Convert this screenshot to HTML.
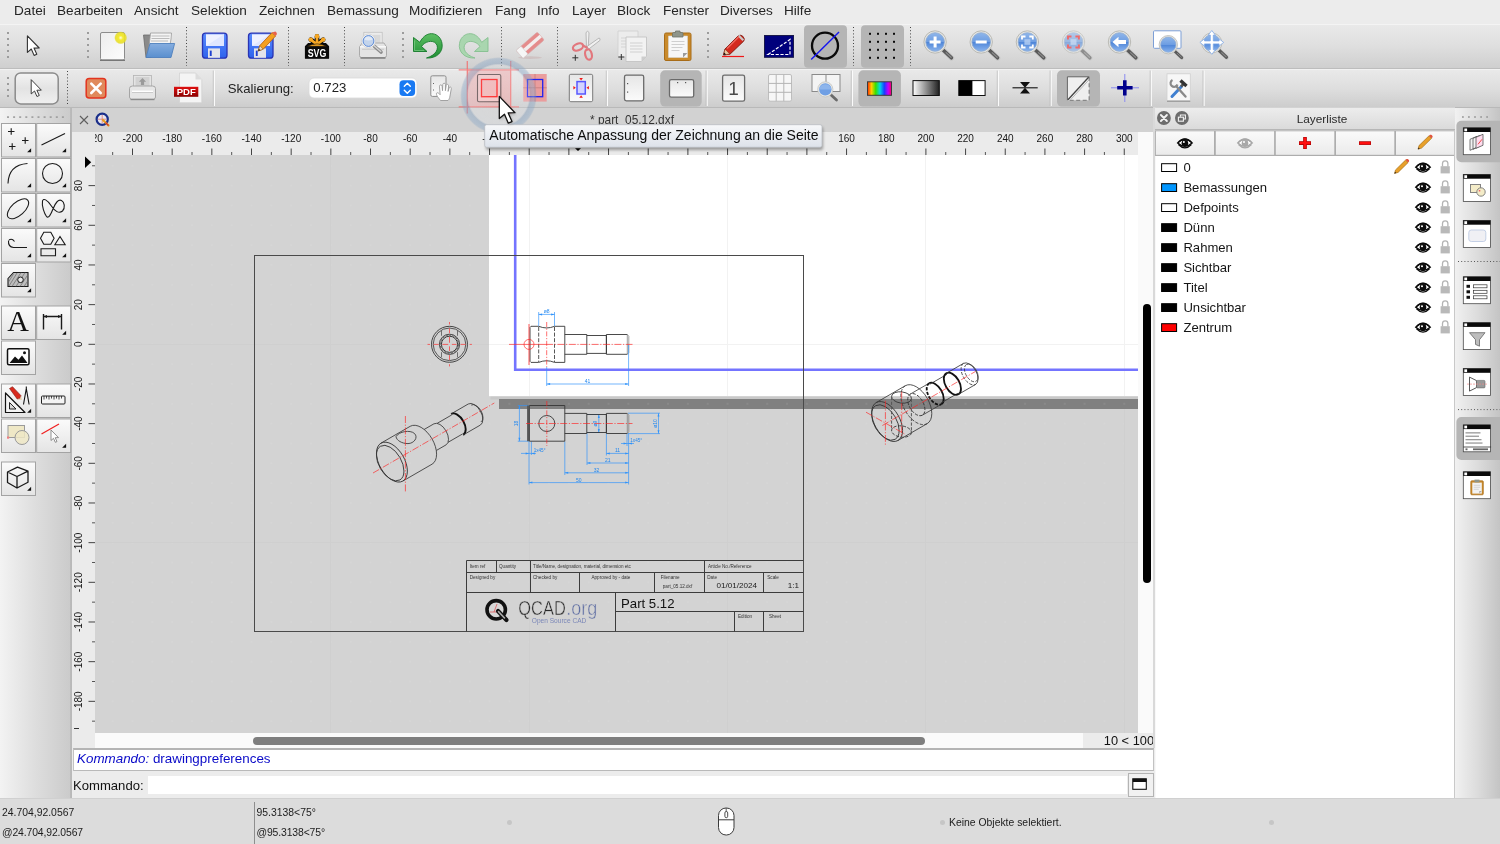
<!DOCTYPE html>
<html><head><meta charset="utf-8"><title>QCAD</title>
<style>
*{box-sizing:border-box;margin:0;padding:0}
html,body{width:1500px;height:844px;overflow:hidden;background:#ececec;font-family:"Liberation Sans",sans-serif;color:#222}
.abs{position:absolute}
svg,#menubar,#tabbar,#status,.txt{will-change:transform}
#menubar{position:absolute;left:0;top:0;width:1500px;height:24px;background:#ececec}
#menubar span{position:absolute;top:2px;font-size:13.6px;line-height:18px;color:#262626;white-space:nowrap}
#tb1{position:absolute;left:0;top:24px;width:1500px;height:45px;background:linear-gradient(#e9e9e9 0%,#e0e0e0 45%,#cfcfcf 100%);border-top:1px solid #f4f4f4;border-bottom:1px solid #bdbdbd}
#tb2{position:absolute;left:0;top:69px;width:1500px;height:39px;background:linear-gradient(#e9e9e9 0%,#dedede 50%,#cdcdcd 100%);border-top:1px solid #f2f2f2;border-bottom:1px solid #b9b9b9}
.vdots{position:absolute;width:1px;border-left:1px dotted #555}
.grip{position:absolute;width:2px;background:repeating-linear-gradient(#9a9a9a 0 2px,transparent 2px 5px)}
.sel{position:absolute;background:#b4b4b4;border-radius:4px}
#lefttb{position:absolute;left:0;top:108px;width:72px;height:690px;background:linear-gradient(90deg,#f3f3f3 0%,#dddddd 50%,#cbcbcb 97%,#b9b9b9 98%,#b9b9b9 100%)}
.tbtn{position:absolute;width:35px;height:35px;background:linear-gradient(#fafafa,#e6e6e6);border:1px solid #a6a6a6;border-top-color:#b8b8b8}
.tbtn:after{content:"";}
.corner{position:absolute;right:4px;bottom:4px;width:0;height:0;border-left:5px solid transparent;border-bottom:5px solid #111}
#tabbar{position:absolute;left:72px;top:108px;width:1083px;height:24px;background:#d2d2d2}
#hruler{position:absolute;left:95px;top:132px;width:1043px;height:23px;background:#ebebeb;overflow:hidden}
#rcorner{position:absolute;left:72px;top:132px;width:23px;height:23px;background:#ebebeb}
#vruler{position:absolute;left:72px;top:155px;width:23px;height:578px;background:#ebebeb;overflow:hidden}
#canvas{position:absolute;left:95px;top:155px;width:1043px;height:578px;background:#d3d3d3;overflow:hidden}
#vscroll{position:absolute;left:1138px;top:132px;width:16px;height:601px;background:#fafafa}
#hscroll{position:absolute;left:72px;top:733px;width:1011px;height:15px;background:linear-gradient(90deg,#ebebeb 0,#ebebeb 23px,#fafafa 23px)}
#layers{position:absolute;left:1155px;top:108px;width:300px;height:690px;background:#fff}
#righttb{position:absolute;left:1455px;top:108px;width:45px;height:690px;background:linear-gradient(90deg,#f1f1f1 0%,#dcdcdc 50%,#c4c4c4 100%)}
#status{position:absolute;left:0;top:798px;width:1500px;height:46px;background:#dcdcdc;box-shadow:inset 0 1px 0 #d0d0d0}
</style></head><body>
<div id="menubar">
<span style="left:14px">Datei</span><span style="left:57px">Bearbeiten</span><span style="left:134px">Ansicht</span><span style="left:191px">Selektion</span><span style="left:259px">Zeichnen</span><span style="left:327px">Bemassung</span><span style="left:409px">Modifizieren</span><span style="left:495px">Fang</span><span style="left:537px">Info</span><span style="left:572px">Layer</span><span style="left:617px">Block</span><span style="left:663px">Fenster</span><span style="left:720px">Diverses</span><span style="left:784px">Hilfe</span>
</div>
<div id="tb1"></div>
<svg class="abs" style="left:0;top:22px" width="1500" height="48" viewBox="0 22 1500 48" font-family="Liberation Sans, sans-serif">
<defs>
<linearGradient id="gPage" x1="0" y1="0" x2="1" y2="1"><stop offset="0" stop-color="#ededed"/><stop offset="1" stop-color="#fdfdfd"/></linearGradient>
<linearGradient id="gBlue" x1="0" y1="0" x2="0" y2="1"><stop offset="0" stop-color="#5a8cff"/><stop offset="1" stop-color="#2e62ec"/></linearGradient>
<linearGradient id="gFolder" x1="0" y1="0" x2="0" y2="1"><stop offset="0" stop-color="#86aee0"/><stop offset="1" stop-color="#5a8fce"/></linearGradient>
<linearGradient id="gLens" x1="0" y1="0" x2="0" y2="1"><stop offset="0" stop-color="#8fb6ea"/><stop offset=".5" stop-color="#6d9de2"/><stop offset=".52" stop-color="#4f86d8"/><stop offset="1" stop-color="#8ab4ee"/></linearGradient>
<linearGradient id="gGreen" x1="0" y1="0" x2="0" y2="1"><stop offset="0" stop-color="#5dbf63"/><stop offset="1" stop-color="#1f8f35"/></linearGradient>
<radialGradient id="gGlow"><stop offset="0" stop-color="#fffde0"/><stop offset=".35" stop-color="#f4ea30"/><stop offset=".8" stop-color="#e6dc20" stop-opacity=".85"/><stop offset="1" stop-color="#e6dc20" stop-opacity="0"/></radialGradient>
<g id="mag"><path d="M7.5 7.5L16.5 16" stroke="#bbb" stroke-width="5.2" stroke-linecap="round" opacity=".5"/><path d="M8 8L16.3 15.8" stroke="#5a5a5a" stroke-width="3.6" stroke-linecap="round"/><path d="M11 10.6L16 15.3" stroke="#8a8a8a" stroke-width="1.2" stroke-linecap="round"/><circle r="11.2" fill="#e6e6e2" stroke="#b9b9b4" stroke-width="1"/><circle r="9.3" fill="url(#gLens)" stroke="#8ea9cf" stroke-width=".8"/></g>
<g id="arrowcur"><path d="M0 0V16.6L3.9 13.2L6.7 19.6L9.4 18.4L6.6 12.3L11.8 12.2Z" fill="#fff" stroke="#333" stroke-width="1.1" stroke-linejoin="round"/></g>
</defs>
<!-- grips -->
<g fill="#9c9c9c"><rect x="7" y="32" width="2" height="2"/><rect x="7" y="38" width="2" height="2"/><rect x="7" y="44" width="2" height="2"/><rect x="7" y="50" width="2" height="2"/><rect x="7" y="56" width="2" height="2"/>
<rect x="87" y="32" width="2" height="2"/><rect x="87" y="38" width="2" height="2"/><rect x="87" y="44" width="2" height="2"/><rect x="87" y="50" width="2" height="2"/><rect x="87" y="56" width="2" height="2"/>
<rect x="402" y="32" width="2" height="2"/><rect x="402" y="38" width="2" height="2"/><rect x="402" y="44" width="2" height="2"/><rect x="402" y="50" width="2" height="2"/><rect x="402" y="56" width="2" height="2"/>
<rect x="707" y="32" width="2" height="2"/><rect x="707" y="38" width="2" height="2"/><rect x="707" y="44" width="2" height="2"/><rect x="707" y="50" width="2" height="2"/><rect x="707" y="56" width="2" height="2"/></g>
<!-- dotted separators -->
<g stroke="#444" stroke-width="1" stroke-dasharray="1 2.2"><path d="M186.5 27V66M288.5 27V66M344.5 27V66M501.5 27V66M557.5 27V66M853.5 27V66M910.5 27V66"/></g>
<!-- cursor -->
<use href="#arrowcur" x="27.4" y="35.8"/>
<!-- new -->
<rect x="100.5" y="32.5" width="24" height="27.5" rx="1.5" fill="url(#gPage)" stroke="#8c8c8c" stroke-width="1"/><path d="M100 60.3h25" stroke="#777" stroke-width="1.4"/>
<circle cx="120.7" cy="37.8" r="6.6" fill="url(#gGlow)"/>
<!-- open -->
<path d="M143.5 35l2.5 22.5h5V35z" fill="#8a8a8a" stroke="#6a6a6a" stroke-width=".8"/>
<path d="M148 57l2.5-24h21l-.5 6-3 18z" fill="#f4f4f4" stroke="#999" stroke-width=".8"/>
<path d="M151.5 36h18M151.5 38.5h18M151 41h17" stroke="#bbb" stroke-width="1.2"/>
<path d="M146 57.5L150 43.5h24.6L171 57.5z" fill="url(#gFolder)" stroke="#4f80bd" stroke-width=".9" stroke-linejoin="round"/>
<!-- save -->
<g id="floppy"><rect x="202.5" y="33.2" width="24.5" height="25" rx="3" fill="url(#gBlue)" stroke="#2a34b4" stroke-width="1.3"/>
<rect x="206" y="34.3" width="18" height="11.6" fill="#eef1ff"/><path d="M206 45.9L224 34.3V45.9z" fill="#dfe6ff"/>
<rect x="208" y="48.4" width="12" height="9.4" fill="#e4e4ea"/><rect x="209.8" y="50.6" width="1.9" height="5.4" fill="#2040d0"/></g>
<!-- save as -->
<use href="#floppy" x="46"/>
<path d="M258.2 51l1.6-5.4L272 32.6l3.6 3.4-12.4 13.2z" fill="#f4a020" stroke="#b86010" stroke-width=".8" stroke-linejoin="round"/><path d="M272 32.6l3.6 3.4 1-1.2c.8-1-.2-2.6-1.2-3.2-1-.7-2-.7-2.600z" fill="#e8604a"/><path d="M258.2 51l1.6-5.4 3.4 3.6z" fill="#f0d8b0" stroke="#7a4a10" stroke-width=".5"/><path d="M258.2 51l.7-2.200 1.500 1.500z" fill="#222"/>
<!-- svg -->
<path d="M305.500 58.200V46.500l3-3h17l3 3V58.200z" fill="#0a0a0a" stroke="#0a0a0a" stroke-width="1.200" stroke-linejoin="round"/>
<g stroke="#0a0a0a" stroke-width="4.600" stroke-linecap="round"><path d="M317 44.500V36.300M317 44.500l-6.200-4.900M317 44.500l6.200-4.900"/></g>
<g stroke="#f7a824" stroke-width="2.700" stroke-linecap="round"><path d="M317 44.500V36.300M317 44.500l-6.200-4.900M317 44.500l6.200-4.900"/></g>
<circle cx="317" cy="36.300" r="2.300" fill="#f7a824"/><circle cx="310.800" cy="39.600" r="2.200" fill="#f7a824"/><circle cx="323.200" cy="39.600" r="2.200" fill="#f7a824"/>
<path d="M307.300 46.300q9.700-4.800 19.400 0z" fill="#f7a824" stroke="#0a0a0a" stroke-width=".6"/>
<text x="317" y="57" font-size="11.500" font-weight="bold" fill="#fff" text-anchor="middle" textLength="18.600" lengthAdjust="spacingAndGlyphs">SVG</text>
<!-- print preview -->
<rect x="363.800" y="32.300" width="18.400" height="14" fill="#ececec" stroke="#c2c2c2" stroke-width=".8"/><rect x="373" y="34.800" width="7.500" height="8" fill="#d9d9d9"/>
<path d="M359.500 47l2.500-4h22l2.500 4v8.500q0 2-2 2h-23q-2 0-2-2z" fill="#e4e4e4" stroke="#a4a4a4" stroke-width=".9"/><path d="M360 46.800h26" stroke="#fafafa" stroke-width="1.400"/><path d="M362 49.300h22" stroke="#bdbdbd" stroke-width=".7"/><path d="M360.500 58h25" stroke="#7e7e7e" stroke-width="1.500"/>
<path d="M373.500 45.500l7.500 6.500" stroke="#8a8a8a" stroke-width="3.600" stroke-linecap="round"/><path d="M374 45.600l6.800 5.900" stroke="#d2d2d2" stroke-width="1.400" stroke-linecap="round"/>
<circle cx="368.500" cy="41" r="7" fill="#f2f2f2" stroke="#c9c9c9" stroke-width=".6"/><circle cx="368.500" cy="41" r="5.400" fill="#c3d4ec" stroke="#5b8ad8" stroke-width="1"/><path d="M364.300 39.500a4.400 4.400 0 0 1 8.400 0q-4.200 1.800-8.400 0z" fill="#e2eaf6"/>
<!-- undo -->
<path d="M413.5 37.5V51.5H427L421.5 46.5C424.5 41.5 432.5 39.5 436 43.5C439.5 48 436.5 55 426.5 58C437 58.7 443.500 51.5 442 43.5C440.5 33 427 28.500 419.800 42.300Z" fill="url(#gGreen)" stroke="#157a2a" stroke-width=".9" stroke-linejoin="round"/>
<path d="M414.500 40.500V50.500H424.200" fill="none" stroke="#8fd896" stroke-width=".8" opacity=".7"/>
<!-- redo -->
<path d="M488.00 37.50 V51.50 H474.50 L480.00 46.50 C477.00 41.50 469.00 39.50 465.50 43.50 C462.00 48.00 465.00 55.00 475.00 58.00 C464.50 58.70 458.00 51.50 459.50 43.50 C461.00 33.00 474.50 28.50 481.70 42.30 Z" fill="#a9d6af" stroke="#84c08e" stroke-width=".9" stroke-linejoin="round"/>
<!-- eraser -->
<ellipse cx="530" cy="57.600" rx="12" ry="1.300" fill="#c9b4b4" opacity=".6"/>
<g transform="rotate(-41 530 45)"><rect x="516" y="40" width="28" height="10.500" rx="1.500" fill="#e58c8c" stroke="#d7a3a3" stroke-width=".6"/><rect x="516" y="43.500" width="28" height="3.500" fill="#f3eeee"/><rect x="516" y="40" width="6.500" height="10.500" rx="1" fill="#f6f6f6" stroke="#cfcfcf" stroke-width=".6"/></g>
<!-- scissors -->
<path d="M586.500 47l-.5-14.500q1.800-2.500 3 0l-.8 15.500z" fill="#f1f1f1" stroke="#a9a9a9" stroke-width=".8"/><path d="M587 46.500l12-8.500q1.800.3.800 2.500l-11 8.500z" fill="#f1f1f1" stroke="#a9a9a9" stroke-width=".8"/>
<ellipse cx="578" cy="47" rx="5.300" ry="3.300" transform="rotate(-22 578 47)" fill="none" stroke="#e2777d" stroke-width="2.200"/><ellipse cx="588.500" cy="54.500" rx="3.300" ry="5.300" transform="rotate(-14 588.500 54.500)" fill="none" stroke="#e2777d" stroke-width="2.200"/><path d="M583 45.500l4.500 2.500M587 49.500l0 1" stroke="#e2777d" stroke-width="2.200"/>
<path d="M572.300 57.800h6M575.300 54.800v6" stroke="#333" stroke-width="1"/>
<!-- copy -->
<path d="M618 31h20v26h-20z" fill="#ececec" stroke="#cfcfcf" stroke-width=".8"/><path d="M621 38h9M621 41h9M621 44h9M621 47h5" stroke="#d4d4d4" stroke-width="1"/>
<path d="M626 37h20.500v19.500l-5 5H626z" fill="#f2f2f2" stroke="#c4c4c4" stroke-width=".9"/><path d="M641.500 61.500v-5h5z" fill="#cdcdcd"/><path d="M630 43h12.500M630 46h12.500M630 49h12.500M630 52h12.500" stroke="#d0d0d0" stroke-width="1"/>
<path d="M618.300 57h6M621.300 54v6" stroke="#333" stroke-width="1"/>
<!-- paste -->
<rect x="664.500" y="33" width="26.500" height="27.500" rx="1.500" fill="#c98a2b" stroke="#a86c18" stroke-width="1"/>
<path d="M668.500 36h19v21.500h-19z" fill="#f7f7f7" stroke="#d9d9d9" stroke-width=".6"/><path d="M683 57.500v-4.500h4.500z" fill="#9b9b9b"/><path d="M671.500 41.500h13M671.500 44.500h13M671.500 47.500h11M671.500 50.500h8" stroke="#cfcfcf" stroke-width="1"/>
<path d="M672.500 37v-3.500q0-1 1-1h2v-1.500h4.500v1.500h2q1 0 1 1v3.500z" fill="#8f958a" stroke="#6f756b" stroke-width=".8"/>
<!-- pencil -->
<path d="M722 56.500h22" stroke="#f01818" stroke-width="1.200"/>
<path d="M723.500 55l1.500-6 13.500-13.500q2.500-1 4.500 1t.8 4.500L730 54.200z" fill="#d42a1e" stroke="#7a1a10" stroke-width=".9" stroke-linejoin="round"/><path d="M738.500 35.500l4.800 4.800" stroke="#c9c9c9" stroke-width="2.200"/><path d="M727 48.500l12-12" stroke="#f0645a" stroke-width="1.600"/><path d="M723.500 55l1.500-6 4.800 5z" fill="#e9c9a0" stroke="#7a1a10" stroke-width=".5"/><path d="M723.500 55l.7-2.600 1.900 2z" fill="#111"/>
<!-- draft -->
<rect x="764.500" y="35.500" width="29" height="21.800" fill="#00007c" stroke="#1a1a4a" stroke-width="1"/><path d="M768 54.500L790 39.500V54.500Z" fill="none" stroke="#fff" stroke-width="1.200" stroke-dasharray="3.200 1.600"/>
<!-- selected: circle slash -->
<rect x="804" y="25.300" width="43" height="42.500" rx="4" fill="#b5b5b5"/>
<circle cx="825" cy="45.700" r="13" fill="none" stroke="#0a0a0a" stroke-width="2.300"/><path d="M811.200 59.400L839 32" stroke="#1414f0" stroke-width="1.400"/>
<!-- selected: grid dots -->
<rect x="861" y="25.300" width="43" height="42.500" rx="4" fill="#b5b5b5"/>
<g fill="#0a0a0a"><rect x="869" y="32.800" width="2" height="2"/><rect x="877" y="32.800" width="2" height="2"/><rect x="885" y="32.800" width="2" height="2"/><rect x="893" y="32.800" width="2" height="2"/><rect x="869" y="40.800" width="2" height="2"/><rect x="877" y="40.800" width="2" height="2"/><rect x="885" y="40.800" width="2" height="2"/><rect x="893" y="40.800" width="2" height="2"/><rect x="869" y="48.800" width="2" height="2"/><rect x="877" y="48.800" width="2" height="2"/><rect x="885" y="48.800" width="2" height="2"/><rect x="893" y="48.800" width="2" height="2"/><rect x="869" y="56.800" width="2" height="2"/><rect x="877" y="56.800" width="2" height="2"/><rect x="885" y="56.800" width="2" height="2"/><rect x="893" y="56.800" width="2" height="2"/></g>
<!-- zoom icons -->
<use href="#mag" x="935.100" y="42"/><path d="M929.600 42h11M935.100 36.500v11" stroke="#fff" stroke-width="3"/>
<use href="#mag" x="981.200" y="42"/><path d="M975.700 42h11" stroke="#fff" stroke-width="3"/>
<use href="#mag" x="1027.400" y="42"/><path d="M1022 39.500v-3h3.500M1029.300 36.500h3.500v3M1032.800 44.500v3h-3.500M1025.500 47.500h-3.500v-3" fill="none" stroke="#fff" stroke-width="1.800"/><rect x="1024.400" y="39.200" width="6" height="5.600" fill="#b7d0f2" opacity=".8"/>
<g opacity=".6"><use href="#mag" x="1073.500" y="42"/></g><path d="M1068 39.500v-3h3.500M1075.400 36.500h3.500v3M1078.900 44.500v3h-3.500M1071.500 47.500h-3.500v-3" fill="none" stroke="#f06a6a" stroke-width="1.900"/><rect x="1070.500" y="39.200" width="6" height="5.600" fill="#c9daf2" opacity=".8"/>
<use href="#mag" x="1119.500" y="42"/><path d="M1112.500 42l6-5.200v3.200h7.500v4h-7.500v3.200z" fill="#fff"/>
<!-- zoom window -->
<rect x="1153.500" y="30.800" width="27.500" height="17.500" rx="1" fill="#fff" stroke="#7d9fd6" stroke-width="1"/>
<g transform="translate(1168.300 44.700) scale(.82)"><use href="#mag"/></g>
<!-- pan -->
<g transform="translate(1211.800 43) scale(.9)"><use href="#mag"/></g>
<path d="M1211.800 30.500l3.600 4.600h-2.100v5.800h5.800v-2.100l4.600 3.600-4.600 3.600v-2.100h-5.800v5.800h2.100l-3.600 4.600-3.600-4.600h2.100v-5.800h-5.800v2.100l-4.600-3.600 4.600-3.600v2.100h5.800v-5.800h-2.100z" fill="#fff" stroke="#7fa8e6" stroke-width=".8" stroke-linejoin="round"/>
</svg>
<div id="tb2"></div>
<svg class="abs" style="left:0;top:68px" width="1500" height="41" viewBox="0 68 1500 41" font-family="Liberation Sans, sans-serif">
<defs>
<linearGradient id="gBtn" x1="0" y1="0" x2="0" y2="1"><stop offset="0" stop-color="#f4f4f4"/><stop offset=".5" stop-color="#e3e3e3"/><stop offset="1" stop-color="#f0f0f0"/></linearGradient>
<linearGradient id="gPg2" x1="0" y1="0" x2="0" y2="1"><stop offset="0" stop-color="#e6e6e6"/><stop offset="1" stop-color="#fbfbfb"/></linearGradient>
<linearGradient id="gRain" x1="0" y1="0" x2="1" y2="0"><stop offset="0" stop-color="#ff2a00"/><stop offset=".17" stop-color="#ffd000"/><stop offset=".34" stop-color="#38e000"/><stop offset=".52" stop-color="#00d8e8"/><stop offset=".7" stop-color="#1840ff"/><stop offset=".86" stop-color="#c000ff"/><stop offset="1" stop-color="#ff0060"/></linearGradient>
<linearGradient id="gGray" x1="0" y1="0" x2="1" y2="0"><stop offset="0" stop-color="#fff"/><stop offset="1" stop-color="#202020"/></linearGradient>
<linearGradient id="gPdf" x1="0" y1="0" x2="0" y2="1"><stop offset="0" stop-color="#e01010"/><stop offset="1" stop-color="#8a0000"/></linearGradient>
</defs>
<!-- grip -->
<g fill="#9c9c9c"><rect x="7" y="77" width="2" height="2"/><rect x="7" y="83" width="2" height="2"/><rect x="7" y="89" width="2" height="2"/><rect x="7" y="95" width="2" height="2"/></g>
<g stroke="#444" stroke-width="1" stroke-dasharray="1 2.2"><path d="M67.500 71V105"/></g>
<!-- light separators -->
<g stroke="#fbfbfb" stroke-width="1.400"><path d="M214.300 70.500V106M607.300 70.500V106M707.100 70.500V106M852.300 70.500V106M998.300 70.500V106M1051.100 70.500V106M1151.200 70.500V106M1204 70.500V106"/></g>
<g stroke="#bcbcbc" stroke-width=".8"><path d="M213.300 70.500V106M606.300 70.500V106M706.100 70.500V106M851.300 70.500V106M997.300 70.500V106M1050.100 70.500V106M1150.200 70.500V106M1203 70.500V106"/></g>
<!-- cursor button -->
<rect x="15.200" y="72.900" width="43" height="31" rx="5.500" fill="url(#gBtn)" stroke="#8b8b8b" stroke-width="1.500"/>
<path d="M30.800 79.600V96.200L34.700 92.800L37.500 99.200L40.200 98L37.400 91.900L42.600 91.800Z" fill="#fff" stroke="#333" stroke-width="1.100" stroke-linejoin="round" transform="translate(4.700 11.200) scale(.86)"/>
<!-- close -->
<rect x="86.200" y="78.500" width="19.600" height="19.600" rx="3" fill="#e08a5c" stroke="#e2341f" stroke-width="1.500"/><path d="M91.300 83.600l9.400 9.400M100.700 83.600l-9.400 9.400" stroke="#fff" stroke-width="2.600" stroke-linecap="round"/>
<!-- print -->
<rect x="133.500" y="75.500" width="18" height="11" fill="#e4e4e4" stroke="#b4b4b4" stroke-width=".8"/><rect x="135.500" y="77" width="14" height="9" fill="#d2d2d2"/><path d="M142.500 78l3.600 3.800h-2v3.200h-3.200v-3.200h-2z" fill="#9a9a9a"/>
<path d="M129.500 88.500q0-2.500 3-2.500h20q3 0 3 2.500v8.500q0 2-2 2h-22q-2 0-2-2z" fill="#e6e6e6" stroke="#9e9e9e" stroke-width=".9"/><path d="M132 91.300h21" stroke="#fff" stroke-width="1.400"/><path d="M132 92.500h21" stroke="#bdbdbd" stroke-width=".7"/><path d="M130.500 99.600h24" stroke="#8a8a8a" stroke-width="1.200"/>
<!-- pdf -->
<path d="M179.500 73h16l6.300 6.500V102.800h-22.300z" fill="#f4f4f4" stroke="#d2d2d2" stroke-width=".8"/><path d="M195.500 73v6.500h6.300z" fill="#dcdcdc"/>
<rect x="174" y="86.800" width="24.300" height="10" fill="url(#gPdf)"/><text x="186.200" y="95.300" font-size="9.500" font-weight="bold" fill="#fff" text-anchor="middle" textLength="19" lengthAdjust="spacingAndGlyphs">PDF</text>
<!-- Skalierung -->
<text x="227.800" y="93.300" font-size="13.200" fill="#1e1e1e">Skalierung:</text>
<rect x="309" y="78" width="108" height="20" rx="5" fill="#fff" stroke="#d9d9d9" stroke-width=".8"/>
<text x="313.300" y="91.800" font-size="13.200" fill="#1e1e1e">0.723</text>
<rect x="399.500" y="80.200" width="15.600" height="15.800" rx="4" fill="#1979f2"/><path d="M404.300 86.200l3-3 3 3M404.300 90.200l3 3 3-3" fill="none" stroke="#fff" stroke-width="1.400" stroke-linecap="round" stroke-linejoin="round"/>
<!-- hand/page -->
<rect x="430.800" y="75.800" width="15.200" height="20.600" rx="1.500" fill="url(#gPg2)" stroke="#8c8c8c" stroke-width="1"/><rect x="433" y="83" width="1" height="1" fill="#666"/><rect x="433" y="89.500" width="1" height="1" fill="#666"/>
<path d="M440.500 100.500c-2-2.500-4.800-6-4-7.300 1-1.300 2.600.3 3.600 1.500l-.6-8.500c0-1.800 2.400-1.800 2.600 0l.4 4.500.3-6.200c.2-1.800 2.500-1.700 2.600 0l0 6.200.8-5.300c.3-1.600 2.500-1.300 2.400.4l-.5 5.600 1-3.500c.5-1.500 2.500-.9 2.200.7l-1.300 7.400c-.4 2.500-1 3.500-2 4.500z" fill="#fff" stroke="#9a9a9a" stroke-width=".9" stroke-linejoin="round"/>
<!-- hover: auto-fit -->
<!-- next: pink + blue -->
<rect x="523.300" y="74" width="23.400" height="27.600" fill="#ea9d9d"/><path d="M535 74V101.600M523.300 87.800H546.700" stroke="#c98080" stroke-width=".9"/>
<rect x="527.500" y="79.500" width="15.200" height="17.200" fill="none" stroke="#2222f0" stroke-width="1.300"/>
<!-- fit page arrows -->
<rect x="569.300" y="74.300" width="23.400" height="27.400" rx="1.500" fill="url(#gPg2)" stroke="#7a7a7a" stroke-width="1"/>
<rect x="577" y="81.600" width="8.300" height="12.400" fill="#d4d4ff" stroke="#5858ff" stroke-width="1.500"/>
<g fill="#f01818"><path d="M581.100 80.400l-1.800-2.400h3.600z"/><path d="M581.100 95.300l-1.800 2.400h3.600z"/><path d="M575.800 87.800l-2.400-1.800v3.600z"/><path d="M586.500 87.800l2.400-1.800v3.600z"/></g>
<!-- portrait -->
<rect x="624.500" y="75.200" width="19.200" height="25.600" rx="1.800" fill="url(#gPg2)" stroke="#6a6a6a" stroke-width="1.300"/><rect x="627" y="83" width="1.200" height="1.200" fill="#555"/><rect x="627" y="91.500" width="1.200" height="1.200" fill="#555"/>
<!-- landscape selected -->
<rect x="660.200" y="70.300" width="41.500" height="36.300" rx="5" fill="#b5b5b5"/>
<rect x="669.500" y="79.600" width="24.200" height="17.600" rx="1.800" fill="url(#gPg2)" stroke="#6a6a6a" stroke-width="1.300"/><rect x="677" y="82" width="1.200" height="1.200" fill="#555"/><rect x="685" y="82" width="1.200" height="1.200" fill="#555"/>
<!-- 1 page -->
<rect x="722.600" y="75.200" width="22" height="26" rx="1.800" fill="url(#gPg2)" stroke="#6a6a6a" stroke-width="1.300"/><text x="733.600" y="95.200" font-size="19" fill="#4a4a4a" text-anchor="middle">1</text>
<!-- grid pages -->
<rect x="768.500" y="74.500" width="23" height="26.700" rx="1.500" fill="#f6f6f6" stroke="#bdbdbd" stroke-width="1"/><path d="M776.200 74.500v26.700M783.800 74.500v26.700M768.500 83.400h23M768.500 92.300h23" stroke="#b5b5b5" stroke-width="1"/>
<!-- zoom page -->
<rect x="812" y="74.500" width="28" height="17" fill="#f4f4f4" stroke="#8a8a8a" stroke-width="1"/><path d="M826 74.500v17" stroke="#8a8a8a" stroke-width="1"/>
<path d="M830 94l6.500 6" stroke="#6a6a6a" stroke-width="2.800" stroke-linecap="round"/><circle cx="825.300" cy="89.400" r="7.600" fill="#e8e8e4" stroke="#c4c4c0" stroke-width=".8"/><circle cx="825.300" cy="89.400" r="6.200" fill="#6f9fe4"/><path d="M819.200 89.400a6.200 6.200 0 0 1 12.200 0z" fill="#8db5ec"/>
<!-- rainbow selected -->
<rect x="858.400" y="70.300" width="42.500" height="36.300" rx="5" fill="#b5b5b5"/>
<rect x="867.500" y="81.800" width="24" height="13.500" fill="url(#gRain)" stroke="#3a3a3a" stroke-width="1"/>
<rect x="913" y="80.600" width="26.300" height="14.900" fill="url(#gGray)" stroke="#111" stroke-width="1"/>
<rect x="958.800" y="80.600" width="26.300" height="14.900" fill="#fff" stroke="#111" stroke-width="1"/><rect x="958.800" y="80.600" width="13.600" height="14.900" fill="#000"/>
<!-- lineweight -->
<path d="M1012.500 87.800H1037.700" stroke="#111" stroke-width="1.100"/><path d="M1020 82h10l-5 5.800zM1020 93.600h10l-5-5.800z" fill="#111"/>
<!-- selected page diag -->
<rect x="1057" y="70.300" width="43" height="36.300" rx="5" fill="#b5b5b5"/>
<rect x="1067.400" y="76.800" width="21.800" height="23.500" fill="#efefef"/><path d="M1067.400 100.300V76.800H1089.200" fill="none" stroke="#666" stroke-width="1"/><path d="M1089.200 76.800V100.300H1067.400" fill="none" stroke="#888" stroke-width="1.300" stroke-dasharray="4 2.500"/><path d="M1068 99.800L1088.600 77.300" stroke="#444" stroke-width="1.300"/><path d="M1070.500 99.800L1089 79.800" stroke="#aaa" stroke-width=".8"/>
<!-- blue plus -->
<path d="M1111 87.800h28M1124.800 74v28" stroke="#8a8af0" stroke-width="1"/><path d="M1117.200 87.800h15.400M1124.800 80.200v15.400" stroke="#00008c" stroke-width="3.600"/>
<!-- tools -->
<rect x="1167" y="73.800" width="23.300" height="26.800" fill="#f7f7f7" stroke="#d0d0d0" stroke-width=".8"/><path d="M1167 101.300h23.300" stroke="#9a9a9a" stroke-width="1.200"/>
<path d="M1172 96.500l9.500-10" stroke="#3f7fd0" stroke-width="3" stroke-linecap="round"/><path d="M1181 86.500l3-3" stroke="#555" stroke-width="2.600"/><path d="M1180.500 80.500l6 5.500" stroke="#333" stroke-width="3.400"/>
<path d="M1185.500 96.500l-9-10" stroke="#8a8a8a" stroke-width="2.400" stroke-linecap="round"/><path d="M1172.500 80a3.600 3.600 0 1 0 5 4.500" fill="none" stroke="#8a8a8a" stroke-width="2.200"/>
</svg>
<div id="lefttb"></div>
<svg class="abs" style="left:0;top:108px" width="72" height="689" viewBox="0 108 72 689" font-family="Liberation Sans, sans-serif">
<defs><linearGradient id="gTb" x1="0" y1="0" x2="0" y2="1"><stop offset="0" stop-color="#fbfbfb"/><stop offset="1" stop-color="#e4e4e4"/></linearGradient></defs>
<g fill="#9c9c9c"><rect x="7.0" y="116.300" width="2" height="1.600"/><rect x="13.1" y="116.300" width="2" height="1.600"/><rect x="19.2" y="116.300" width="2" height="1.600"/><rect x="25.3" y="116.300" width="2" height="1.600"/><rect x="31.4" y="116.300" width="2" height="1.600"/><rect x="37.5" y="116.300" width="2" height="1.600"/><rect x="43.6" y="116.300" width="2" height="1.600"/><rect x="49.7" y="116.300" width="2" height="1.600"/><rect x="55.8" y="116.300" width="2" height="1.600"/><rect x="61.9" y="116.300" width="2" height="1.600"/></g>
<rect x="1.5" y="123.5" width="34" height="33.500" fill="url(#gTb)" stroke="#a3a3a3" stroke-width="1"/><path d="M31.1 148.2v4h-4z" fill="#111"/>
<rect x="36.7" y="123.5" width="34" height="33.500" fill="url(#gTb)" stroke="#a3a3a3" stroke-width="1"/><path d="M66.1 148.2v4h-4z" fill="#111"/>
<rect x="1.5" y="158.5" width="34" height="33.500" fill="url(#gTb)" stroke="#a3a3a3" stroke-width="1"/><path d="M31.1 183.2v4h-4z" fill="#111"/>
<rect x="36.7" y="158.5" width="34" height="33.500" fill="url(#gTb)" stroke="#a3a3a3" stroke-width="1"/><path d="M66.1 183.2v4h-4z" fill="#111"/>
<rect x="1.5" y="193.5" width="34" height="33.500" fill="url(#gTb)" stroke="#a3a3a3" stroke-width="1"/><path d="M31.1 218.2v4h-4z" fill="#111"/>
<rect x="36.7" y="193.5" width="34" height="33.500" fill="url(#gTb)" stroke="#a3a3a3" stroke-width="1"/><path d="M66.1 218.2v4h-4z" fill="#111"/>
<rect x="1.5" y="228.5" width="34" height="33.500" fill="url(#gTb)" stroke="#a3a3a3" stroke-width="1"/><path d="M31.1 253.2v4h-4z" fill="#111"/>
<rect x="36.7" y="228.5" width="34" height="33.500" fill="url(#gTb)" stroke="#a3a3a3" stroke-width="1"/><path d="M66.1 253.2v4h-4z" fill="#111"/>
<rect x="1.5" y="263.5" width="34" height="33.500" fill="url(#gTb)" stroke="#a3a3a3" stroke-width="1"/><path d="M31.1 288.2v4h-4z" fill="#111"/>
<rect x="1.5" y="306.0" width="34" height="33.500" fill="url(#gTb)" stroke="#a3a3a3" stroke-width="1"/>
<rect x="36.7" y="306.0" width="34" height="33.500" fill="url(#gTb)" stroke="#a3a3a3" stroke-width="1"/><path d="M66.1 330.7v4h-4z" fill="#111"/>
<rect x="1.5" y="341.0" width="34" height="33.500" fill="url(#gTb)" stroke="#a3a3a3" stroke-width="1"/>
<rect x="1.5" y="384.0" width="34" height="33.500" fill="url(#gTb)" stroke="#a3a3a3" stroke-width="1"/><path d="M31.1 408.7v4h-4z" fill="#111"/>
<rect x="36.7" y="384.0" width="34" height="33.500" fill="url(#gTb)" stroke="#a3a3a3" stroke-width="1"/>
<rect x="1.5" y="419.0" width="34" height="33.500" fill="url(#gTb)" stroke="#a3a3a3" stroke-width="1"/>
<rect x="36.7" y="419.0" width="34" height="33.500" fill="url(#gTb)" stroke="#a3a3a3" stroke-width="1"/><path d="M66.1 443.7v4h-4z" fill="#111"/>
<rect x="1.5" y="462.0" width="34" height="33.500" fill="url(#gTb)" stroke="#a3a3a3" stroke-width="1"/><path d="M31.1 486.7v4h-4z" fill="#111"/>
<path d="M8 131.500h6.500M11.200 128.300v6.500M22 140.500h6.500M25.200 137.300v6.500M9 146.500h6.500M12.200 143.300v6.500" stroke="#1a1a1a" stroke-width="1.100" fill="none"/>
<path d="M41.500 145L65 133.500" stroke="#1a1a1a" stroke-width="1.100" fill="none"/>
<path d="M8 183.500Q8.500 165 27.500 163.500" stroke="#1a1a1a" stroke-width="1.100" fill="none"/>
<circle cx="52.500" cy="173.500" r="10" stroke="#1a1a1a" stroke-width="1.100" fill="none"/>
<ellipse cx="18" cy="208.800" rx="13" ry="6.600" transform="rotate(-42 18 208.800)" stroke="#1a1a1a" stroke-width="1.100" fill="none"/>
<path d="M42.500 201c1-3 4.500-1.500 8.500 4.500s8 8.500 11.500 5.500c3-3 2-9-1-10.500s-6 2-8.500 8.500c-2 5-4.500 10-6.500 7.500s-5-10.500-4-15.500z" stroke="#1a1a1a" stroke-width="1.100" fill="none"/>
<path d="M8.500 240.500q-.5 6.500 5 7h13.500M14.500 241.500q-2.500-3.500-5.500-1.500" stroke="#1a1a1a" stroke-width="1.100" fill="none"/>
<path d="M40.500 238.300l3.300-6h7l3.300 6-3.300 6h-7zM54.800 244.800l5.200-8.300 5.200 8.300zM41 248.800h14.500v7H41z" stroke="#1a1a1a" stroke-width="1.100" fill="none"/>
<path d="M8 278.500l5.500-6H28v14H8z" fill="#bdbdbd" stroke="#1a1a1a" stroke-width="1.100"/><path d="M9 286l8-13M12 286.500l9-14M16 286.500l9-14M20 286.500l8-12M24 286.500l4-6M8.500 282l5-8" stroke="#6a6a6a" stroke-width=".7"/><circle cx="20.500" cy="279.800" r="2.800" fill="#e8e8e8" stroke="#1a1a1a" stroke-width="1"/>
<text x="18" y="331.200" font-family="Liberation Serif, serif" font-size="30" fill="#111" text-anchor="middle">A</text>
<path d="M43.500 329.500V314M61.500 329.500V314M43.500 316.500H61.500" stroke="#1a1a1a" stroke-width="1.400" fill="none"/><path d="M43.500 316.500l3.500-1.500v3zM61.500 316.500l-3.500-1.500v3z" fill="#1a1a1a"/>
<rect x="7.500" y="348.800" width="21.500" height="16" rx="1.500" fill="#fff" stroke="#111" stroke-width="1.500"/><path d="M9.500 363l5.500-6.500 3.500 3.200 3.500-4.200 5.500 7.500z" fill="#111"/><circle cx="24.500" cy="352.800" r="1.500" fill="#111"/>
<path d="M5.500 393v19.500h19.500z" fill="#f4f4f4" stroke="#111" stroke-width="1.200" stroke-linejoin="round"/><path d="M9.500 402.500v6.500h6.500z" fill="#d6d6d6" stroke="#111" stroke-width=".9"/>
<path d="M9.500 388.500l3-1.800 8.500 9-1 2.800-2.800.5z" fill="#d82a1e" stroke="#7a1a10" stroke-width=".6"/><path d="M17.200 399l2.800-.5 1-2.800 .8 4.300z" fill="#e9c9a0"/>
<path d="M26.300 388.500l-2.800 16M26.300 388.500l2.800 16M26.300 386.500v3" stroke="#111" stroke-width="1.100" fill="none"/>
<rect x="41.500" y="396" width="23.500" height="8" rx="1" fill="#f4f4f4" stroke="#222" stroke-width="1"/><path d="M44 396v3.500M46.500 396v2.500M49 396v3.500M51.500 396v2.500M54 396v3.500M56.500 396v2.500M59 396v3.500M61.500 396v2.500" stroke="#222" stroke-width=".8"/>
<rect x="8" y="425.500" width="16.500" height="12" fill="#efe8c6" stroke="#9a9a9a" stroke-width="1"/><circle cx="22" cy="437.500" r="7" fill="#efe8c6" fill-opacity=".85" stroke="#9a9a9a" stroke-width="1"/><rect x="7" y="436.500" width="2.200" height="2.200" fill="#f08080"/>
<path d="M41.500 434l17.500-10" stroke="#f02020" stroke-width="1.300"/><path d="M51 430v10.500l2.500-2.200 1.800 4 1.700-.7-1.800-3.900 3.300-.1z" fill="#fff" stroke="#777" stroke-width=".8" stroke-linejoin="round"/>
<path d="M7.500 472l10-4.800 10.500 4v11l-11 5.800-9.500-5.500zM7.500 472l9.500 4.500 11-5.300M17 476.500v11.500" stroke="#1a1a1a" stroke-width="1.300" fill="none" stroke-linejoin="round"/>
</svg>
<div id="tabbar"><svg class="abs" style="left:6px;top:6px" width="12" height="12"><path d="M2 2L10 10M10 2L2 10" stroke="#5e5e5e" stroke-width="1.1" fill="none"/></svg><svg class="abs" style="left:23px;top:4px" width="16" height="16" viewBox="0 0 16 16"><circle cx="7.2" cy="7.2" r="5.6" fill="#e8e8f0" stroke="#1b2f8a" stroke-width="2.2"/><path d="M7.2 3v8.4M3 7.2h8.4" stroke="#d66" stroke-width=".7"/><path d="M8 8l5.5 5.5" stroke="#e8a020" stroke-width="2.2" stroke-linecap="round"/><path d="M10.5 10.5l3 3" stroke="#c33" stroke-width="1.2"/></svg><span class="abs" style="left:518px;top:3.5px;font-size:11.9px;line-height:16px;color:#333;white-space:nowrap">* part_05.12.dxf</span></div>
<div id="rcorner"></div>
<div id="hruler"><svg width="1043" height="23" style="position:absolute;left:0;top:0"><path d="M-2.17 16.5V23" stroke="#444" stroke-width="1"/><text x="-2.17" y="9.6" font-size="10" text-anchor="middle" fill="#161616">-220</text><path d="M17.67 20V23" stroke="#555" stroke-width="1"/><path d="M37.50 16.5V23" stroke="#444" stroke-width="1"/><text x="37.50" y="9.6" font-size="10" text-anchor="middle" fill="#161616">-200</text><path d="M57.34 20V23" stroke="#555" stroke-width="1"/><path d="M77.17 16.5V23" stroke="#444" stroke-width="1"/><text x="77.17" y="9.6" font-size="10" text-anchor="middle" fill="#161616">-180</text><path d="M97.01 20V23" stroke="#555" stroke-width="1"/><path d="M116.84 16.5V23" stroke="#444" stroke-width="1"/><text x="116.84" y="9.6" font-size="10" text-anchor="middle" fill="#161616">-160</text><path d="M136.68 20V23" stroke="#555" stroke-width="1"/><path d="M156.51 16.5V23" stroke="#444" stroke-width="1"/><text x="156.51" y="9.6" font-size="10" text-anchor="middle" fill="#161616">-140</text><path d="M176.35 20V23" stroke="#555" stroke-width="1"/><path d="M196.18 16.5V23" stroke="#444" stroke-width="1"/><text x="196.18" y="9.6" font-size="10" text-anchor="middle" fill="#161616">-120</text><path d="M216.02 20V23" stroke="#555" stroke-width="1"/><path d="M235.85 16.5V23" stroke="#444" stroke-width="1"/><text x="235.85" y="9.6" font-size="10" text-anchor="middle" fill="#161616">-100</text><path d="M255.69 20V23" stroke="#555" stroke-width="1"/><path d="M275.52 16.5V23" stroke="#444" stroke-width="1"/><text x="275.52" y="9.6" font-size="10" text-anchor="middle" fill="#161616">-80</text><path d="M295.36 20V23" stroke="#555" stroke-width="1"/><path d="M315.19 16.5V23" stroke="#444" stroke-width="1"/><text x="315.19" y="9.6" font-size="10" text-anchor="middle" fill="#161616">-60</text><path d="M335.03 20V23" stroke="#555" stroke-width="1"/><path d="M354.86 16.5V23" stroke="#444" stroke-width="1"/><text x="354.86" y="9.6" font-size="10" text-anchor="middle" fill="#161616">-40</text><path d="M374.70 20V23" stroke="#555" stroke-width="1"/><path d="M394.53 16.5V23" stroke="#444" stroke-width="1"/><text x="394.53" y="9.6" font-size="10" text-anchor="middle" fill="#161616">-20</text><path d="M414.37 20V23" stroke="#555" stroke-width="1"/><path d="M434.20 16.5V23" stroke="#444" stroke-width="1"/><text x="434.20" y="9.6" font-size="10" text-anchor="middle" fill="#161616">0</text><path d="M454.04 20V23" stroke="#555" stroke-width="1"/><path d="M473.87 16.5V23" stroke="#444" stroke-width="1"/><text x="473.87" y="9.6" font-size="10" text-anchor="middle" fill="#161616">20</text><path d="M493.71 20V23" stroke="#555" stroke-width="1"/><path d="M513.54 16.5V23" stroke="#444" stroke-width="1"/><text x="513.54" y="9.6" font-size="10" text-anchor="middle" fill="#161616">40</text><path d="M533.38 20V23" stroke="#555" stroke-width="1"/><path d="M553.21 16.5V23" stroke="#444" stroke-width="1"/><text x="553.21" y="9.6" font-size="10" text-anchor="middle" fill="#161616">60</text><path d="M573.05 20V23" stroke="#555" stroke-width="1"/><path d="M592.88 16.5V23" stroke="#444" stroke-width="1"/><text x="592.88" y="9.6" font-size="10" text-anchor="middle" fill="#161616">80</text><path d="M612.72 20V23" stroke="#555" stroke-width="1"/><path d="M632.55 16.5V23" stroke="#444" stroke-width="1"/><text x="632.55" y="9.6" font-size="10" text-anchor="middle" fill="#161616">100</text><path d="M652.38 20V23" stroke="#555" stroke-width="1"/><path d="M672.22 16.5V23" stroke="#444" stroke-width="1"/><text x="672.22" y="9.6" font-size="10" text-anchor="middle" fill="#161616">120</text><path d="M692.06 20V23" stroke="#555" stroke-width="1"/><path d="M711.89 16.5V23" stroke="#444" stroke-width="1"/><text x="711.89" y="9.6" font-size="10" text-anchor="middle" fill="#161616">140</text><path d="M731.73 20V23" stroke="#555" stroke-width="1"/><path d="M751.56 16.5V23" stroke="#444" stroke-width="1"/><text x="751.56" y="9.6" font-size="10" text-anchor="middle" fill="#161616">160</text><path d="M771.39 20V23" stroke="#555" stroke-width="1"/><path d="M791.23 16.5V23" stroke="#444" stroke-width="1"/><text x="791.23" y="9.6" font-size="10" text-anchor="middle" fill="#161616">180</text><path d="M811.07 20V23" stroke="#555" stroke-width="1"/><path d="M830.90 16.5V23" stroke="#444" stroke-width="1"/><text x="830.90" y="9.6" font-size="10" text-anchor="middle" fill="#161616">200</text><path d="M850.74 20V23" stroke="#555" stroke-width="1"/><path d="M870.57 16.5V23" stroke="#444" stroke-width="1"/><text x="870.57" y="9.6" font-size="10" text-anchor="middle" fill="#161616">220</text><path d="M890.40 20V23" stroke="#555" stroke-width="1"/><path d="M910.24 16.5V23" stroke="#444" stroke-width="1"/><text x="910.24" y="9.6" font-size="10" text-anchor="middle" fill="#161616">240</text><path d="M930.08 20V23" stroke="#555" stroke-width="1"/><path d="M949.91 16.5V23" stroke="#444" stroke-width="1"/><text x="949.91" y="9.6" font-size="10" text-anchor="middle" fill="#161616">260</text><path d="M969.74 20V23" stroke="#555" stroke-width="1"/><path d="M989.58 16.5V23" stroke="#444" stroke-width="1"/><text x="989.58" y="9.6" font-size="10" text-anchor="middle" fill="#161616">280</text><path d="M1009.41 20V23" stroke="#555" stroke-width="1"/><path d="M1029.25 16.5V23" stroke="#444" stroke-width="1"/><text x="1029.25" y="9.6" font-size="10" text-anchor="middle" fill="#161616">300</text><path d="M480 16.300h6l-3 2.600z" fill="#000"/></svg></div>
<div id="vruler"><svg width="23" height="578" style="position:absolute;left:0;top:0"><path d="M20 566.16H23" stroke="#555" stroke-width="1"/><path d="M16.5 546.33H23" stroke="#444" stroke-width="1"/><text transform="translate(9.6,546.33) rotate(-90)" font-size="10" text-anchor="middle" fill="#161616">-180</text><path d="M20 526.50H23" stroke="#555" stroke-width="1"/><path d="M16.5 506.66H23" stroke="#444" stroke-width="1"/><text transform="translate(9.6,506.66) rotate(-90)" font-size="10" text-anchor="middle" fill="#161616">-160</text><path d="M20 486.83H23" stroke="#555" stroke-width="1"/><path d="M16.5 466.99H23" stroke="#444" stroke-width="1"/><text transform="translate(9.6,466.99) rotate(-90)" font-size="10" text-anchor="middle" fill="#161616">-140</text><path d="M20 447.15H23" stroke="#555" stroke-width="1"/><path d="M16.5 427.32H23" stroke="#444" stroke-width="1"/><text transform="translate(9.6,427.32) rotate(-90)" font-size="10" text-anchor="middle" fill="#161616">-120</text><path d="M20 407.49H23" stroke="#555" stroke-width="1"/><path d="M16.5 387.65H23" stroke="#444" stroke-width="1"/><text transform="translate(9.6,387.65) rotate(-90)" font-size="10" text-anchor="middle" fill="#161616">-100</text><path d="M20 367.82H23" stroke="#555" stroke-width="1"/><path d="M16.5 347.98H23" stroke="#444" stroke-width="1"/><text transform="translate(9.6,347.98) rotate(-90)" font-size="10" text-anchor="middle" fill="#161616">-80</text><path d="M20 328.14H23" stroke="#555" stroke-width="1"/><path d="M16.5 308.31H23" stroke="#444" stroke-width="1"/><text transform="translate(9.6,308.31) rotate(-90)" font-size="10" text-anchor="middle" fill="#161616">-60</text><path d="M20 288.48H23" stroke="#555" stroke-width="1"/><path d="M16.5 268.64H23" stroke="#444" stroke-width="1"/><text transform="translate(9.6,268.64) rotate(-90)" font-size="10" text-anchor="middle" fill="#161616">-40</text><path d="M20 248.81H23" stroke="#555" stroke-width="1"/><path d="M16.5 228.97H23" stroke="#444" stroke-width="1"/><text transform="translate(9.6,228.97) rotate(-90)" font-size="10" text-anchor="middle" fill="#161616">-20</text><path d="M20 209.13H23" stroke="#555" stroke-width="1"/><path d="M16.5 189.30H23" stroke="#444" stroke-width="1"/><text transform="translate(9.6,189.30) rotate(-90)" font-size="10" text-anchor="middle" fill="#161616">0</text><path d="M20 169.47H23" stroke="#555" stroke-width="1"/><path d="M16.5 149.63H23" stroke="#444" stroke-width="1"/><text transform="translate(9.6,149.63) rotate(-90)" font-size="10" text-anchor="middle" fill="#161616">20</text><path d="M20 129.80H23" stroke="#555" stroke-width="1"/><path d="M16.5 109.96H23" stroke="#444" stroke-width="1"/><text transform="translate(9.6,109.96) rotate(-90)" font-size="10" text-anchor="middle" fill="#161616">40</text><path d="M20 90.12H23" stroke="#555" stroke-width="1"/><path d="M16.5 70.29H23" stroke="#444" stroke-width="1"/><text transform="translate(9.6,70.29) rotate(-90)" font-size="10" text-anchor="middle" fill="#161616">60</text><path d="M20 50.46H23" stroke="#555" stroke-width="1"/><path d="M16.5 30.62H23" stroke="#444" stroke-width="1"/><text transform="translate(9.6,30.62) rotate(-90)" font-size="10" text-anchor="middle" fill="#161616">80</text><path d="M20 10.78H23" stroke="#555" stroke-width="1"/><path d="M2 573.5h5" stroke="#333" stroke-width="1"/><path d="M13 1.600v11.400l6.200-5.700z" fill="#000"/></svg></div>
<div id="canvas"><svg width="1043" height="578" viewBox="95 155 1043 578" style="position:absolute;left:0;top:0" font-family="Liberation Sans, sans-serif"><defs><pattern id="gd" x="529.2" y="344.3" width="19.835" height="19.835" patternUnits="userSpaceOnUse"><rect x="-0.5" y="-0.5" width="1" height="1" fill="#fff" fill-opacity=".28"/><rect x="19.335" y="-0.5" width="1" height="1" fill="#fff" fill-opacity=".28"/><rect x="-0.5" y="19.335" width="1" height="1" fill="#fff" fill-opacity=".28"/><rect x="19.335" y="19.335" width="1" height="1" fill="#fff" fill-opacity=".28"/></pattern></defs>
<rect x="490.5" y="155" width="650" height="244.5" fill="#c8c8c8"/>
<rect x="499" y="399" width="640" height="10" fill="#808080"/>
<rect x="95" y="155" width="1043" height="578" fill="url(#gd)"/>
<rect x="489" y="150" width="650" height="246.2" fill="#ffffff"/>
<path d="M330.5 155V733" stroke="#cfcfcf" stroke-width="1"/>
<path d="M529.5 409V733" stroke="#cfcfcf" stroke-width="1"/>
<path d="M529.5 155V396" stroke="#f2f2f2" stroke-width="1"/>
<path d="M727.5 409V733" stroke="#cfcfcf" stroke-width="1"/>
<path d="M727.5 155V396" stroke="#f2f2f2" stroke-width="1"/>
<path d="M925.5 409V733" stroke="#cfcfcf" stroke-width="1"/>
<path d="M925.5 155V396" stroke="#f2f2f2" stroke-width="1"/>
<path d="M1124.5 409V733" stroke="#cfcfcf" stroke-width="1"/>
<path d="M1124.5 155V396" stroke="#f2f2f2" stroke-width="1"/>
<path d="M95 344.5H489" stroke="#cfcfcf" stroke-width="1"/>
<path d="M489 344.5H1138" stroke="#f2f2f2" stroke-width="1"/>
<path d="M95 542.5H1138" stroke="#cfcfcf" stroke-width="1"/>
<path d="M515.2 155V369.8H1138" fill="none" stroke="#7474ff" stroke-width="2.6"/>
<rect x="254.5" y="255.5" width="549" height="376" fill="none" stroke="#4a4a4a" stroke-width="1"/>
<g stroke="#3c3c3c" stroke-width="1" fill="none"><path d="M466.5 631.5V560.5H803.5"/><path d="M466.5 572.5H803.5M466.5 592.5H803.5M615.5 611.5H803.5"/><path d="M496.5 560.5V572.5M530.5 560.5V592.5M704.5 560.5V592.5M579.5 572.5V592.5M654.5 572.5V592.5M763.5 572.5V592.5M615.5 592.5V631.5M734.5 611.5V631.5M763.5 611.5V631.5"/></g><text x="469.7" y="567.6" font-size="4.6" fill="#333" text-anchor="start" >Item ref</text><text x="499" y="567.6" font-size="4.6" fill="#333" text-anchor="start" >Quantity</text><text x="533" y="567.6" font-size="4.6" fill="#333" text-anchor="start" >Title/Name, designation, material, dimension etc</text><text x="708" y="567.6" font-size="4.6" fill="#333" text-anchor="start" >Article No./Reference</text><text x="469.7" y="578.6" font-size="4.6" fill="#333" text-anchor="start" >Designed by</text><text x="533" y="578.6" font-size="4.6" fill="#333" text-anchor="start" >Checked by</text><text x="591.5" y="578.6" font-size="4.6" fill="#333" text-anchor="start" >Approved by - date</text><text x="660.7" y="578.8" font-size="4.6" fill="#333" text-anchor="start" >Filename</text><text x="707.3" y="578.8" font-size="4.6" fill="#333" text-anchor="start" >Date</text><text x="767.3" y="578.8" font-size="4.6" fill="#333" text-anchor="start" >Scale</text><text x="662.8" y="587.8" font-size="4.6" fill="#333" text-anchor="start" >part_05.12.dxf</text><text x="716.5" y="588" font-size="8.1" fill="#1c1c1c" text-anchor="start" >01/01/2024</text><text x="799" y="588" font-size="8.1" fill="#1c1c1c" text-anchor="end" >1:1</text><text x="621" y="608" font-size="13.2" fill="#111" text-anchor="start" >Part 5.12</text><text x="738" y="618.3" font-size="4.6" fill="#333" text-anchor="start" >Edition</text><text x="769" y="618.3" font-size="4.6" fill="#333" text-anchor="start" >Sheet</text><g><circle cx="496.2" cy="609.8" r="9.2" fill="#d8d8d8" stroke="#111" stroke-width="3.6"/><path d="M490 612h8M497 604l-3 8" stroke="#d33" stroke-width=".6" fill="none"/><path d="M498 611l8.5 9" stroke="#111" stroke-width="4.2" stroke-linecap="round"/><path d="M498.5 611.6l6 6.4" stroke="#aaa" stroke-width="1.6" stroke-linecap="round"/></g><text x="518.3" y="614.6" font-size="19.5" fill="#2a2a2a" textLength="47.5" lengthAdjust="spacingAndGlyphs" style="font-weight:400" stroke="#d3d3d3" stroke-width=".5">QCAD</text><text x="566.3" y="614.6" font-size="19.5" fill="#5f6ea3" textLength="31" lengthAdjust="spacingAndGlyphs" stroke="#d3d3d3" stroke-width=".5">.org</text><text x="531.8" y="622.8" font-size="7" fill="#7b87b8" textLength="54.5" lengthAdjust="spacingAndGlyphs">Open Source CAD</text>
<g fill="none" stroke="#363636" stroke-width=".9"><path d="M531 326.3H538.7Q546.7 329.6 554.5 326.3H564.8V362.4H554.5Q546.7 359.1 538.7 362.4H531L530 361.4V327.3Z"/><path d="M564.8 334.5H586.8V354.3H564.8M586.8 335.5H606.4V353.4H586.8M606.4 334.5H627.3M627.3 354.3H606.4V334.5" /><path d="M627.3 334.5L628.8 336.3V352.5L627.3 354.3M627.3 334.5V354.3" stroke="#777" stroke-width=".7"/><path d="M538.7 327V362M554.5 327V362" stroke-dasharray="4 1.6" stroke="#444"/></g><g fill="none" stroke="#ff2020" stroke-width=".65"><path d="M509 344.4H546"/><path d="M546 344.4H632.5" stroke-dasharray="7 1.6 1.2 1.6"/><path d="M546.7 322V367" stroke-dasharray="5 1.6 1.2 1.6"/><circle cx="529" cy="344.4" r="5"/><path d="M529 324V365" stroke-width="1.5" stroke-opacity=".5"/></g>
<g fill="none" stroke="#2f93fb" stroke-width=".8" stroke-opacity=".85"><path d="M538.7 312V326M554.5 312V326M538.7 314.4H554.5"/><path d="M546.7 367V386M628.6 345V386M546.7 384H628.6"/><path d="M529 405.6H517.8M529 441.2H517.8M519.4 405.6V441.2"/><path d="M529 441.5V484.5M531.4 441.5V455M521 453.4H536"/><path d="M564.8 441.5V475M587 433.5V465M606.4 433.5V455.5M628.6 433.5V484.5M627 433.5V446"/><path d="M606.4 453.4H628.6M587 463H628.6M564.8 472.8H628.6M529 482.6H628.6"/><path d="M598.8 414.5V432.5M587 414.5H600M587 432.5H600"/><path d="M628 413.2H660M628 433.6H660M658.5 413.2V433.6"/><path d="M621 443.5H634"/></g><path d="M538.7 314.4l3.4 -1v2z" fill="#2f93fb" stroke="none"/><path d="M554.5 314.4l-3.4 -1v2z" fill="#2f93fb" stroke="none"/><path d="M546.7 384l3.4 -1v2z" fill="#2f93fb" stroke="none"/><path d="M628.6 384l-3.4 -1v2z" fill="#2f93fb" stroke="none"/><path d="M519.4 405.6l-1 3.4h2z" fill="#2f93fb" stroke="none"/><path d="M519.4 441.2l-1 -3.4h2z" fill="#2f93fb" stroke="none"/><path d="M606.4 453.4l3.4 -1v2z" fill="#2f93fb" stroke="none"/><path d="M628.6 453.4l-3.4 -1v2z" fill="#2f93fb" stroke="none"/><path d="M587 463l3.4 -1v2z" fill="#2f93fb" stroke="none"/><path d="M628.6 463l-3.4 -1v2z" fill="#2f93fb" stroke="none"/><path d="M564.8 472.8l3.4 -1v2z" fill="#2f93fb" stroke="none"/><path d="M628.6 472.8l-3.4 -1v2z" fill="#2f93fb" stroke="none"/><path d="M529 482.6l3.4 -1v2z" fill="#2f93fb" stroke="none"/><path d="M628.6 482.6l-3.4 -1v2z" fill="#2f93fb" stroke="none"/><path d="M598.8 414.5l-1 3.4h2z" fill="#2f93fb" stroke="none"/><path d="M598.8 432.5l-1 -3.4h2z" fill="#2f93fb" stroke="none"/><path d="M658.5 413.2l-1 3.4h2z" fill="#2f93fb" stroke="none"/><path d="M658.5 433.6l-1 -3.4h2z" fill="#2f93fb" stroke="none"/><path d="M529 453.4l-3.4 -1v2z" fill="#2f93fb" stroke="none"/><path d="M531.4 453.4l3.4 -1v2z" fill="#2f93fb" stroke="none"/><path d="M627 443.5l-3.4 -1v2z" fill="#2f93fb" stroke="none"/><path d="M628.6 443.5l3.4 -1v2z" fill="#2f93fb" stroke="none"/><text x="546.6" y="313" font-size="5" fill="#1f86f0" text-anchor="middle">ø8</text><text x="587.6" y="382.6" font-size="5" fill="#1f86f0" text-anchor="middle">41</text><text x="617.5" y="452" font-size="5" fill="#1f86f0" text-anchor="middle">11</text><text x="607.8" y="461.6" font-size="5" fill="#1f86f0" text-anchor="middle">21</text><text x="596.6" y="472.3" font-size="5" fill="#1f86f0" text-anchor="middle">32</text><text x="578.8" y="482.3" font-size="5" fill="#1f86f0" text-anchor="middle">50</text><text x="518" y="423.4" font-size="5" fill="#1f86f0" text-anchor="middle" transform="rotate(-90 518 423.4)">18</text><text x="597.4" y="423.5" font-size="5" fill="#1f86f0" text-anchor="middle" transform="rotate(-90 597.4 423.5)">ø9</text><text x="657.2" y="423.5" font-size="5" fill="#1f86f0" text-anchor="middle" transform="rotate(-90 657.2 423.5)">ø10</text><text x="539.6" y="452" font-size="4.6" fill="#1f86f0" text-anchor="middle">1x45°</text><text x="636.2" y="442.2" font-size="4.6" fill="#1f86f0" text-anchor="middle">1x45°</text>
<g fill="none" stroke="#363636" stroke-width=".9"><path d="M529.5 405.5H564.8V441.2H529.5Z"/><path d="M528.4 405.5V441.2" stroke="#555" stroke-width="2.6"/><circle cx="546.8" cy="423.5" r="8"/><path d="M564.8 413.4H586.8V433.5H564.8M586.8 414.5H606.4V432.5H586.8M606.4 413.4H627.3M627.3 433.5H606.4V413.4"/><path d="M627.3 413.4L628.8 415.2V431.7L627.3 433.5M627.3 413.4V433.5" stroke="#777" stroke-width=".7"/></g><g fill="none" stroke="#ff2020" stroke-width=".65"><path d="M526 423.5H632.5" stroke-dasharray="7 1.6 1.2 1.6"/><path d="M546.8 401V446" stroke-dasharray="5 1.6 1.2 1.6"/></g>
<g fill="none" stroke="#363636" stroke-width=".9"><circle cx="449.5" cy="344.3" r="18"/><circle cx="449.5" cy="344.3" r="16.3" stroke-width=".8"/><circle cx="449.5" cy="344.3" r="10.1" stroke-width=".9"/><circle cx="449.5" cy="344.3" r="8.1" stroke-width="1"/><circle cx="449.5" cy="344.3" r="9.1" stroke-width="1" stroke="#555" stroke-dasharray="2.2 1.3"/><path d="M441.5 330.8V335.8M457.5 330.8V335.8M441.5 352.200V357.200M457.5 352.200V357.200" stroke="#555" stroke-width=".8"/></g><g fill="none" stroke="#ff2020" stroke-width=".65"><path d="M427.5 344.400H472" stroke-dasharray="2.500 3.700 5 3.700 5.800 3.700 4.600 4.100 5 4.100 2.200 9"/><path d="M449.500 322V367.500" stroke-dasharray="2.500 3.700 5 3.700 5.800 3.700 4.600 4.100 5 4.100 2.200 9"/></g>
<g fill="none" stroke="#363636" stroke-width=".85"><ellipse cx="390.20" cy="463.10" rx="19.44" ry="11.22" transform="rotate(60 390.20 463.10)" /><ellipse cx="391.92" cy="462.11" rx="21.87" ry="12.63" transform="rotate(60 391.92 462.11)" /><path d="M410.19 426.30A21.87 12.63 60 0 1 432.06 464.18" /><path d="M380.98 443.17L410.19 426.30M402.85 481.05L432.06 464.18"/><path d="M424.15 429.46L433.95 423.81M436.30 450.51L446.10 444.85"/><path d="M433.95 423.81A12.15 7.02 60 0 1 446.10 444.85" /><path d="M437.13 423.37L451.73 414.94M448.07 442.31L462.67 433.88"/><path d="M451.13 413.89A12.15 7.02 60 0 1 463.28 434.93" stroke-width="1.9" stroke="#111"/><path d="M451.13 413.89L468.31 403.97M463.28 434.93L480.46 425.01"/><path d="M468.31 403.97A12.15 7.02 60 0 1 480.46 425.01" /><path d="M471.24 405.08A9.72 5.61 60 0 1 480.96 421.92" /><path d="M396 436.6C399 431.5 410 429.5 414.5 433.5C418.5 437.5 414 443.5 408 443.6C402 443.6 396.5 440.5 396 436.6Z"/></g><g fill="none" stroke="#ff2020" stroke-width=".65"><path d="M373 473L494.3 403" stroke-dasharray="7 1.6 1.2 1.6"/><path d="M405.4 416V492.5" stroke-dasharray="7 1.6 1.2 1.6"/></g>
<g fill="none" stroke="#363636" stroke-width=".85"><ellipse cx="885.40" cy="422.50" rx="19.44" ry="11.22" transform="rotate(60 885.40 422.50)" /><ellipse cx="887.12" cy="421.51" rx="21.87" ry="12.63" transform="rotate(60 887.12 421.51)" /><path d="M905.39 385.70A21.87 12.63 60 0 1 927.26 423.58" /><path d="M905.39 385.70A21.87 12.63 60 0 0 927.26 423.58" stroke-dasharray="3.2 1.5"/><ellipse cx="916.32" cy="404.64" rx="12.15" ry="7.02" transform="rotate(60 916.32 404.64)" stroke-dasharray="3.2 1.5"/><path d="M876.18 402.57L905.39 385.70M898.05 440.45L927.26 423.58"/><path d="M910.25 394.12L929.15 383.21M922.40 415.17L941.30 404.25" stroke-width=".8"/><path d="M929.15 383.21A12.15 7.02 60 0 1 941.30 404.25" stroke-width="1.8" stroke="#111"/><path d="M929.15 383.21A12.15 7.02 60 0 0 941.30 404.25" stroke-width="1.8" stroke="#111" stroke-dasharray="3.2 1.5"/><path d="M929.75 384.26L946.93 374.34M940.69 403.20L957.87 393.28"/><ellipse cx="952.40" cy="383.81" rx="12.15" ry="7.02" transform="rotate(60 952.40 383.81)" stroke-width="1.8" stroke="#111"/><path d="M946.33 373.29L963.51 363.37M958.48 394.33L975.66 384.41"/><path d="M963.51 363.37A12.15 7.02 60 0 1 975.66 384.41" /><path d="M963.51 363.37A12.15 7.02 60 0 0 975.66 384.41" stroke-dasharray="3.2 1.5"/><path d="M966.44 364.48A9.72 5.61 60 0 1 976.16 381.32" /><path d="M966.44 364.48A9.72 5.61 60 0 0 976.16 381.32" stroke-dasharray="3.2 1.5"/><ellipse cx="901.5" cy="397.5" rx="10" ry="5.6" transform="rotate(8 901.5 397.5)"/><ellipse cx="901.5" cy="431.5" rx="10" ry="5.6" transform="rotate(8 901.5 431.5)" stroke-dasharray="3.2 1.5"/><path d="M891.6 397V431M911.4 399V433" stroke="#555" stroke-width="1" stroke-dasharray="3.2 1.5"/></g><g fill="none" stroke="#ff2020" stroke-width=".65"><path d="M882.4 425.5L975.4 371.5" stroke-dasharray="7 1.6 1.2 1.6"/><path d="M866 412.2L904.7 434" stroke-dasharray="7 1.6 1.2 1.6"/><path d="M885.4 400.7V446" stroke-dasharray="7 1.6 1.2 1.6"/><path d="M901.7 391.7V437" stroke-dasharray="7 1.6 1.2 1.6"/></g></svg></div>
<div id="vscroll"><div class="abs" style="left:4.5px;top:172px;width:8px;height:279px;border-radius:4px;background:#000"></div></div>
<div id="hscroll"><div class="abs" style="left:181px;top:4px;width:672px;height:8px;border-radius:4px;background:#7e7e7e"></div></div>
<div class="abs txt" style="left:1083px;top:733px;width:72px;height:15px;background:#ebebeb;font-size:12.8px;line-height:15px;text-align:right;padding-right:1px;color:#111;white-space:nowrap">10 &lt; 100</div>
<div id="layers"></div>
<svg class="abs" style="left:1153px;top:107px" width="303" height="691" viewBox="1153 107 303 691" font-family="Liberation Sans, sans-serif">
<defs><linearGradient id="gLt" x1="0" y1="0" x2="0" y2="1"><stop offset="0" stop-color="#ededed"/><stop offset="1" stop-color="#dadada"/></linearGradient><linearGradient id="gLb" x1="0" y1="0" x2="0" y2="1"><stop offset="0" stop-color="#fafafa"/><stop offset="1" stop-color="#ebebeb"/></linearGradient><g id="eye"><path d="M-7.200 0Q0 -7.800 7.200 0Q0 6.600 -7.200 0Z" fill="#fff" stroke="currentColor" stroke-width="1.500"/><path d="M-7.200 -.2Q0 -8.600 7.200 -.2Q0 -5 -7.200 -.2Z" fill="currentColor"/><circle cx="0" cy=".2" r="3.300" fill="currentColor"/><circle cx="-1" cy="-.9" r="1" fill="#fff"/><path d="M-6.500 1.500Q0 8.200 6.500 1.500" fill="none" stroke="currentColor" stroke-width="1.300"/></g><g id="lock"><path d="M-2.700 -1v-2.800a2.700 2.700 0 0 1 5.400 0v2.800" fill="none" stroke="#b4b4b4" stroke-width="1.300"/><rect x="-4.600" y="-1.200" width="9.200" height="7.200" fill="#b9b9b9"/></g><g id="pen"><path d="M-6.500 6.200l1-3.600L4.500-7.200l2.600 2.500-10 9.800z" fill="#e8a02a" stroke="#9a6410" stroke-width=".6" stroke-linejoin="round"/><path d="M4.500-7.200l2.600 2.500.9-1c.5-.7-.2-1.800-.9-2.300s-1.500-.5-1.900 0z" fill="#e0523c"/><path d="M-6.500 6.200l.5-1.800 1.300 1.300z" fill="#222"/></g></defs>
<rect x="1153" y="107" width="2.200" height="691" fill="#d9d9d9"/>
<rect x="1155" y="107.500" width="300" height="22" fill="url(#gLt)"/><path d="M1155 129.800H1455" stroke="#b6b6b6" stroke-width="1.400"/>
<circle cx="1163.900" cy="118" r="6.900" fill="#6c6c6c"/><path d="M1160.900 115l6 6M1166.900 115l-6 6" stroke="#f2f2f2" stroke-width="1.900" stroke-linecap="round"/>
<circle cx="1181.900" cy="118" r="6.900" fill="#6c6c6c"/><rect x="1178.400" y="117.200" width="5" height="4" fill="none" stroke="#f2f2f2" stroke-width="1.100"/><path d="M1180.400 116.800v-1.800h5v4h-1.500" fill="none" stroke="#f2f2f2" stroke-width="1.100"/>
<text x="1322" y="123.200" font-size="11.800" fill="#2a2a2a" text-anchor="middle">Layerliste</text>
<rect x="1155" y="130.500" width="300" height="25.500" fill="#adadad"/>
<rect x="1155.9" y="131.300" width="58.1" height="23.500" fill="url(#gLb)"/>
<rect x="1215.8" y="131.300" width="58.3" height="23.500" fill="url(#gLb)"/>
<rect x="1275.8" y="131.300" width="58.5" height="23.500" fill="url(#gLb)"/>
<rect x="1336" y="131.300" width="58.3" height="23.500" fill="url(#gLb)"/>
<rect x="1396" y="131.300" width="58.3" height="23.500" fill="url(#gLb)"/>
<use href="#eye" x="1184.900" y="143" color="#0a0a0a"/>
<use href="#eye" x="1245" y="143" color="#a8a8a8"/>
<path d="M1299 143.100h12M1305 137.100v12" stroke="#a00000" stroke-width="3.600"/><path d="M1299.500 143.100h11M1305 137.600v11" stroke="#ff1010" stroke-width="2.500"/>
<path d="M1359 143.100h12" stroke="#a00000" stroke-width="3.600"/><path d="M1359.500 143.100h11" stroke="#ff1010" stroke-width="2.500"/>
<use href="#pen" x="1424.500" y="143"/>
<rect x="1161.600" y="163.7" width="15" height="7.800" fill="#fff" stroke="#000" stroke-width="1"/>
<text x="1183.400" y="171.9" font-size="13.100" fill="#151515">0</text>
<use href="#eye" x="1423" y="167.2" color="#0a0a0a"/>
<use href="#lock" x="1445.200" y="167.4"/>
<rect x="1161.600" y="183.7" width="15" height="7.800" fill="#0096ff" stroke="#000" stroke-width="1"/>
<text x="1183.400" y="191.9" font-size="13.100" fill="#151515">Bemassungen</text>
<use href="#eye" x="1423" y="187.2" color="#0a0a0a"/>
<use href="#lock" x="1445.200" y="187.4"/>
<rect x="1161.600" y="203.7" width="15" height="7.800" fill="#fff" stroke="#000" stroke-width="1"/>
<text x="1183.400" y="211.9" font-size="13.100" fill="#151515">Defpoints</text>
<use href="#eye" x="1423" y="207.2" color="#0a0a0a"/>
<use href="#lock" x="1445.200" y="207.4"/>
<rect x="1161.600" y="223.7" width="15" height="7.800" fill="#000" stroke="#000" stroke-width="1"/>
<text x="1183.400" y="231.9" font-size="13.100" fill="#151515">Dünn</text>
<use href="#eye" x="1423" y="227.2" color="#0a0a0a"/>
<use href="#lock" x="1445.200" y="227.4"/>
<rect x="1161.600" y="243.7" width="15" height="7.800" fill="#000" stroke="#000" stroke-width="1"/>
<text x="1183.400" y="251.9" font-size="13.100" fill="#151515">Rahmen</text>
<use href="#eye" x="1423" y="247.2" color="#0a0a0a"/>
<use href="#lock" x="1445.200" y="247.4"/>
<rect x="1161.600" y="263.7" width="15" height="7.800" fill="#000" stroke="#000" stroke-width="1"/>
<text x="1183.400" y="271.9" font-size="13.100" fill="#151515">Sichtbar</text>
<use href="#eye" x="1423" y="267.2" color="#0a0a0a"/>
<use href="#lock" x="1445.200" y="267.4"/>
<rect x="1161.600" y="283.7" width="15" height="7.800" fill="#000" stroke="#000" stroke-width="1"/>
<text x="1183.400" y="291.9" font-size="13.100" fill="#151515">Titel</text>
<use href="#eye" x="1423" y="287.2" color="#0a0a0a"/>
<use href="#lock" x="1445.200" y="287.4"/>
<rect x="1161.600" y="303.7" width="15" height="7.800" fill="#000" stroke="#000" stroke-width="1"/>
<text x="1183.400" y="311.9" font-size="13.100" fill="#151515">Unsichtbar</text>
<use href="#eye" x="1423" y="307.2" color="#0a0a0a"/>
<use href="#lock" x="1445.200" y="307.4"/>
<rect x="1161.600" y="323.7" width="15" height="7.800" fill="#ff0000" stroke="#000" stroke-width="1"/>
<text x="1183.400" y="331.9" font-size="13.100" fill="#151515">Zentrum</text>
<use href="#eye" x="1423" y="327.2" color="#0a0a0a"/>
<use href="#lock" x="1445.200" y="327.4"/>
<use href="#pen" x="1401" y="167.300"/>
<path d="M1454.600 130V798" stroke="#c9c9c9" stroke-width="1.200"/>
</svg>
<div id="righttb"></div>
<svg class="abs" style="left:1454px;top:108px" width="46" height="689" viewBox="1454 108 46 689" font-family="Liberation Sans, sans-serif">
<g fill="#9c9c9c"><rect x="1462.0" y="116.200" width="1.800" height="1.600"/><rect x="1468.0" y="116.200" width="1.800" height="1.600"/><rect x="1474.1" y="116.200" width="1.800" height="1.600"/><rect x="1480.2" y="116.200" width="1.800" height="1.600"/><rect x="1486.2" y="116.200" width="1.800" height="1.600"/></g>
<rect x="1456.400" y="120.700" width="50" height="41.500" rx="5" fill="#b5b5b5"/>
<rect x="1456.400" y="417" width="50" height="43" rx="5" fill="#b5b5b5"/>
<rect x="1463.300" y="127.7" width="27.200" height="27" fill="#fff" stroke="#4a4a4a" stroke-width=".8"/><rect x="1463.300" y="127.7" width="27.200" height="4.300" fill="#0a0a0a"/><rect x="1464.300" y="128.5" width="2.800" height="2.800" fill="#fff"/>
<rect x="1463.300" y="174.4" width="27.200" height="27" fill="#fff" stroke="#4a4a4a" stroke-width=".8"/><rect x="1463.300" y="174.4" width="27.200" height="4.300" fill="#0a0a0a"/><rect x="1464.300" y="175.2" width="2.800" height="2.800" fill="#fff"/>
<rect x="1463.300" y="220.4" width="27.200" height="27" fill="#fff" stroke="#4a4a4a" stroke-width=".8"/><rect x="1463.300" y="220.4" width="27.200" height="4.300" fill="#0a0a0a"/><rect x="1464.300" y="221.2" width="2.800" height="2.800" fill="#fff"/>
<rect x="1463.300" y="276.7" width="27.200" height="27" fill="#fff" stroke="#4a4a4a" stroke-width=".8"/><rect x="1463.300" y="276.7" width="27.200" height="4.300" fill="#0a0a0a"/><rect x="1464.300" y="277.5" width="2.800" height="2.800" fill="#fff"/>
<rect x="1463.300" y="322.59999999999997" width="27.200" height="27" fill="#fff" stroke="#4a4a4a" stroke-width=".8"/><rect x="1463.300" y="322.59999999999997" width="27.200" height="4.300" fill="#0a0a0a"/><rect x="1464.300" y="323.4" width="2.800" height="2.800" fill="#fff"/>
<rect x="1463.300" y="368.5" width="27.200" height="27" fill="#fff" stroke="#4a4a4a" stroke-width=".8"/><rect x="1463.300" y="368.5" width="27.200" height="4.300" fill="#0a0a0a"/><rect x="1464.300" y="369.3" width="2.800" height="2.800" fill="#fff"/>
<rect x="1463.300" y="424.79999999999995" width="27.200" height="27" fill="#fff" stroke="#4a4a4a" stroke-width=".8"/><rect x="1463.300" y="424.79999999999995" width="27.200" height="4.300" fill="#0a0a0a"/><rect x="1464.300" y="425.59999999999997" width="2.800" height="2.800" fill="#fff"/>
<rect x="1463.300" y="471.7" width="27.200" height="27" fill="#fff" stroke="#4a4a4a" stroke-width=".8"/><rect x="1463.300" y="471.7" width="27.200" height="4.300" fill="#0a0a0a"/><rect x="1464.300" y="472.5" width="2.800" height="2.800" fill="#fff"/>
<path d="M1458 261.500H1500M1458 409.600H1500" stroke="#555" stroke-width="1" stroke-dasharray="1 2.200"/>
<path d="M1470 139.3l7-3v11l-7 3zM1473 138.3l7-3v11l-7 3z" fill="#f2f2f2" stroke="#555" stroke-width=".8"/><path d="M1476 137.3l7-3v11l-7 3z" fill="#fde" stroke="#555" stroke-width=".8"/><path d="M1478 144.3l4-5" stroke="#e33" stroke-width=".9"/>
<rect x="1470.500" y="184.5" width="10" height="8" fill="#f4ecc8" stroke="#777" stroke-width=".9"/><circle cx="1481" cy="192" r="4.200" fill="#f4ecc8" stroke="#777" stroke-width=".9"/><rect x="1478.800" y="190" width="1.500" height="1.500" fill="#e66"/>
<rect x="1468.800" y="230" width="17" height="11.500" rx="2.500" fill="#f0f0f4" stroke="#c4d0e6" stroke-width="1"/>
<rect x="1466.500" y="284.8" width="3.500" height="3" fill="#111"/><rect x="1473.500" y="284.8" width="13.500" height="3" fill="#fff" stroke="#333" stroke-width=".7"/>
<rect x="1466.500" y="290.3" width="3.500" height="3" fill="#111"/><rect x="1473.500" y="290.3" width="13.500" height="3" fill="#fff" stroke="#333" stroke-width=".7"/>
<rect x="1466.500" y="295.8" width="3.500" height="3" fill="#111"/><rect x="1473.500" y="295.8" width="13.500" height="3" fill="#fff" stroke="#333" stroke-width=".7"/>
<path d="M1469.500 332.7h15.500l-5.500 7v6.500l-4-1.800v-4.700z" fill="#bdbdbd" stroke="#666" stroke-width=".8" stroke-linejoin="round"/>
<path d="M1469.500 377.1v14l7-3.500v-7z" fill="#fff" stroke="#444" stroke-width=".9"/><rect x="1476.500" y="380.40000000000003" width="8.500" height="7.500" rx="1" fill="#9a9a9a" stroke="#666" stroke-width=".6"/><path d="M1467 384.1h20" stroke="#f08a8a" stroke-width=".7" stroke-dasharray="2 1"/>
<rect x="1465.500" y="432.2" width="15" height="1.300" fill="#9a9a9a"/>
<rect x="1465.500" y="435.6" width="13.5" height="1.300" fill="#9a9a9a"/>
<rect x="1465.500" y="439.0" width="16" height="1.300" fill="#9a9a9a"/>
<rect x="1465.500" y="442.4" width="17" height="1.300" fill="#9a9a9a"/>
<path d="M1463.300 447.0h27.800" stroke="#333" stroke-width=".8"/><rect x="1473" y="448.4" width="15" height="1.800" fill="#666"/><rect x="1465.500" y="448.4" width="2" height="1.800" fill="#666"/>
<rect x="1470.800" y="480.8" width="12.500" height="14" rx="1" fill="#c98a2b" stroke="#a86c18" stroke-width=".7"/><rect x="1472.300" y="482.6" width="9.500" height="11" fill="#f2f2f2"/><rect x="1474.500" y="479.6" width="5" height="2.800" fill="#8f958a"/><path d="M1473.800 485.3h6.500M1473.800 487.3h6.500M1473.800 489.3h5" stroke="#c8c8c8" stroke-width=".7"/><path d="M1479.300 493.6v-2.500h2.500z" fill="#aaa"/>
</svg>
<div class="abs" style="left:72px;top:748px;width:1083px;height:50px;background:#ececec"></div>
<div class="abs" style="left:72.500px;top:748px;width:1081.500px;height:23px;background:#fff;border:1px solid #c2c2c2;border-top:2px solid #b4b4b4;border-bottom:1.500px solid #b9b9b9"></div>
<div class="abs txt" style="left:77px;top:750.500px;font-size:13.400px;line-height:16px;color:#0a0ac8;white-space:nowrap"><i>Kommando:</i> drawingpreferences</div>
<div class="abs txt" style="left:73px;top:776.500px;font-size:13.100px;line-height:17px;color:#111;white-space:nowrap">Kommando:</div>
<div class="abs" style="left:148px;top:775.500px;width:979px;height:18.500px;background:#fff"></div>
<div class="abs" style="left:1127.500px;top:772.500px;width:26px;height:24.500px;background:#f1f1f1;border:1px solid #b4b4b4"></div>
<svg class="abs" style="left:1132px;top:778px" width="16" height="13"><rect x=".8" y=".8" width="13.500" height="10.500" fill="#fff" stroke="#111" stroke-width="1.100"/><rect x=".8" y=".8" width="13.500" height="3.200" fill="#111"/></svg>
<div id="status">
<span style="position:absolute;font-size:10.400px;line-height:12px;color:#1c1c1c;white-space:nowrap;left:2px;top:8.500px">24.704,92.0567</span>
<span style="position:absolute;font-size:10.400px;line-height:12px;color:#1c1c1c;white-space:nowrap;left:2px;top:29px;letter-spacing:-.12px">@24.704,92.0567</span>
<span style="position:absolute;font-size:10.400px;line-height:12px;color:#1c1c1c;white-space:nowrap;left:256.500px;top:8.500px">95.3138&lt;75°</span>
<span style="position:absolute;font-size:10.400px;line-height:12px;color:#1c1c1c;white-space:nowrap;left:256.500px;top:29px;letter-spacing:-.12px">@95.3138&lt;75°</span>
<span style="position:absolute;font-size:10.400px;line-height:12px;color:#1c1c1c;white-space:nowrap;left:949px;top:18.500px">Keine Objekte selektiert.</span>
<div class="abs" style="left:253.500px;top:4px;width:1px;height:42px;background:#8e8e8e"></div>
<div class="abs" style="left:506.5px;top:21.500px;width:5px;height:5px;border-radius:50%;background:#c6c6c6"></div>
<div class="abs" style="left:940.0px;top:21.500px;width:5px;height:5px;border-radius:50%;background:#c6c6c6"></div>
<div class="abs" style="left:1269.0px;top:21.500px;width:5px;height:5px;border-radius:50%;background:#c6c6c6"></div>
<svg class="abs" style="left:716px;top:8px" width="20" height="30" viewBox="716 806 20 30"><rect x="718.500" y="808" width="15.500" height="27" rx="7.500" fill="#fff" stroke="#3a3a3a" stroke-width="1"/><path d="M718.500 819.800h15.500" stroke="#3a3a3a" stroke-width="1"/><path d="M726.200 808v4" stroke="#3a3a3a" stroke-width=".8"/><rect x="724.900" y="811.500" width="2.800" height="6.200" rx="1.400" fill="#fff" stroke="#3a3a3a" stroke-width=".9"/></svg>
</div>
<svg class="abs" style="left:440px;top:40px;pointer-events:none" width="420" height="130" viewBox="440 40 420 130" font-family="Liberation Sans, sans-serif">
<defs>
<radialGradient id="gHalo" cx="498.600" cy="95.500" r="38.500" gradientUnits="userSpaceOnUse"><stop offset="0" stop-color="#ffffff" stop-opacity=".10"/><stop offset=".78" stop-color="#e8eef6" stop-opacity=".22"/><stop offset=".83" stop-color="#7f9dbe" stop-opacity=".42"/><stop offset=".9" stop-color="#8fabc9" stop-opacity=".5"/><stop offset=".96" stop-color="#86a4c4" stop-opacity=".36"/><stop offset="1" stop-color="#86a4c4" stop-opacity="0"/></radialGradient>
<linearGradient id="gTip" x1="0" y1="0" x2="0" y2="1"><stop offset="0" stop-color="#f7f8fa"/><stop offset="1" stop-color="#dde2ea"/></linearGradient>
<filter id="fSh" x="-5%" y="-30%" width="110%" height="180%"><feGaussianBlur stdDeviation="1.600"/></filter>
</defs>
<rect x="467.300" y="69.600" width="43.400" height="37.400" fill="#ee9c9c" fill-opacity=".55"/>
<path d="M467.300 61V113.500M510.700 61V113.500M458.700 69.800H519M458.700 106.800H519" stroke="#f26b6b" stroke-width="1.300" stroke-opacity=".8"/>
<rect x="477.500" y="74.500" width="23.300" height="27.200" rx="1.500" fill="#f0c4c4" stroke="#5e4a4a" stroke-width="1.100"/>
<rect x="481.500" y="79.500" width="15.500" height="17.200" fill="#f0b4b4" stroke="#ff1818" stroke-width="1.300"/>
<circle cx="498.600" cy="95.500" r="38.500" fill="url(#gHalo)"/>
<!-- tooltip -->
<rect x="486" y="127" width="337" height="23" rx="2" fill="#000" opacity=".35" filter="url(#fSh)"/>
<rect x="484.700" y="124.700" width="337.300" height="22.600" rx="2" fill="url(#gTip)" stroke="#b9bcc2" stroke-width=".8"/>
<text x="489.300" y="140.300" font-size="14" fill="#0c0c0c">Automatische Anpassung der Zeichnung an die Seite</text>
<!-- mouse cursor -->
<path d="M499.300 96.400V118.600L504.500 114.200L508.300 123.200L512 121.600L508.200 112.900L515 112.700Z" fill="#000" opacity=".25" transform="translate(1 1.500)" filter="url(#fSh)"/>
<path d="M499.300 96.400V118.600L504.500 114.200L508.300 123.200L512 121.600L508.200 112.900L515 112.700Z" fill="#fff" stroke="#111" stroke-width="1.300" stroke-linejoin="round"/>
</svg>
</body></html>
